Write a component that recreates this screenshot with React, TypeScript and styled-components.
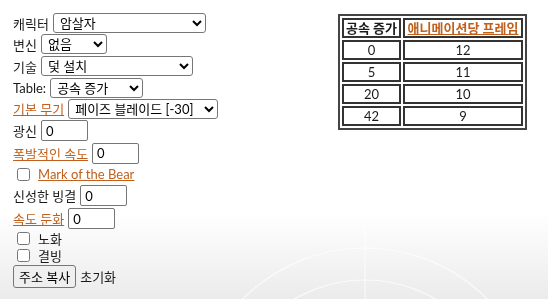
import styled, { createGlobalStyle } from 'styled-components';

const GlobalStyle = createGlobalStyle`
  body {
    margin: 8px;
    font-family: Lato, 'Noto Sans CJK KR', sans-serif;
    font-size: 13px;
    color: #1a1a1a;
    background: #fff;
  }
`;

const Page = styled.div`
  display: flex;
  align-items: flex-start;
  padding: 5px 5px 0;
  height: 286px;
  box-sizing: border-box;
`;

// faint decorative backdrop at the bottom of the page
const Backdrop = styled.svg`
  position: fixed;
  left: 0;
  top: 0;
  width: 548px;
  height: 299px;
  z-index: -1;
`;

const Form = styled.div`
  flex: 0 0 325px;
  display: flex;
  flex-direction: column;
`;

const Row = styled.div<{ $h: number }>`
  display: flex;
  align-items: center;
  gap: 4px;
  height: ${({ $h }) => $h}px;
`;

const LinkLabel = styled.a`
  color: #c0601c;
  text-decoration: underline;
  cursor: pointer;
`;

const Select = styled.select<{ $w: number }>`
  width: ${({ $w }) => $w}px;
  height: 20px;
  font-family: inherit;
  font-size: 13px;
  color: #000;
  background: #fff;
  border: 1px solid #767676;
  border-radius: 3px;
  padding: 0 2px;
`;

const NumInput = styled.input`
  width: 47px;
  height: 21px;
  box-sizing: border-box;
  font-family: inherit;
  font-size: 13px;
  border: 1px solid #767676;
  border-radius: 2px;
  padding: 1px 4px;
`;

const Check = styled.input`
  width: 13px;
  height: 13px;
  margin: 0 4px 0 4px;
`;

const Button = styled.button`
  height: 23px;
  padding: 1px 5px;
  font-family: inherit;
  font-size: 13px;
  color: #000;
  background: #efefef;
  border: 1px solid #767676;
  border-radius: 3px;
`;

const Table = styled.table`
  margin-top: 1px;
  border: 2px solid #444;
  border-spacing: 2px;
  font-size: 13px;
`;

const Cell = styled.td<{ $w: number; $head?: boolean }>`
  box-sizing: border-box;
  width: ${({ $w }) => $w}px;
  height: 20px;
  border: 2px solid #333;
  padding: 0 1px;
  line-height: 16px;
  text-align: center;
  white-space: nowrap;
  font-weight: ${({ $head }) => ($head ? 'bold' : 'normal')};
`;

const rows: [number, number][] = [
  [0, 12],
  [5, 11],
  [20, 10],
  [42, 9],
];

export default function App() {
  return (
    <>
      <GlobalStyle />
      <Backdrop viewBox="0 0 548 299">
        <defs>
          <linearGradient id="fade" x1="0" y1="0" x2="0" y2="1">
            <stop offset="0.71" stopColor="#fff" />
            <stop offset="1" stopColor="#ebebeb" />
          </linearGradient>
        </defs>
        <rect width="548" height="299" fill="url(#fade)" />
        <g fill="none" stroke="#fff" strokeWidth="1.2" opacity="0.7">
          <circle cx="365" cy="420" r="172" />
          <circle cx="365" cy="420" r="140" />
          <line x1="365" y1="222" x2="365" y2="299" />
          <circle cx="640" cy="420" r="150" />
        </g>
      </Backdrop>
      <Page>
        <Form>
          <Row $h={20}>
            <span>캐릭터</span>
            <Select $w={153} defaultValue="암살자">
              <option>암살자</option>
            </Select>
          </Row>
          <Row $h={22}>
            <span>변신</span>
            <Select $w={66} defaultValue="없음">
              <option>없음</option>
            </Select>
          </Row>
          <Row $h={22}>
            <span>기술</span>
            <Select $w={152} defaultValue="덫 설치">
              <option>덫 설치</option>
            </Select>
          </Row>
          <Row $h={21}>
            <span>Table:</span>
            <Select $w={93} defaultValue="공속 증가">
              <option>공속 증가</option>
            </Select>
          </Row>
          <Row $h={21}>
            <LinkLabel>기본 무기</LinkLabel>
            <Select $w={150} defaultValue="페이즈 블레이드 [-30]">
              <option>페이즈 블레이드 [-30]</option>
            </Select>
          </Row>
          <Row $h={23}>
            <span>광신</span>
            <NumInput defaultValue="0" />
          </Row>
          <Row $h={22}>
            <LinkLabel>폭발적인 속도</LinkLabel>
            <NumInput defaultValue="0" />
          </Row>
          <Row $h={20}>
            <Check type="checkbox" />
            <LinkLabel>Mark of the Bear</LinkLabel>
          </Row>
          <Row $h={23}>
            <span>신성한 빙결</span>
            <NumInput defaultValue="0" />
          </Row>
          <Row $h={23}>
            <LinkLabel>속도 둔화</LinkLabel>
            <NumInput defaultValue="0" />
          </Row>
          <Row $h={17}>
            <Check type="checkbox" />
            <span>노화</span>
          </Row>
          <Row $h={17}>
            <Check type="checkbox" />
            <span>결빙</span>
          </Row>
          <Row $h={25}>
            <Button>주소 복사</Button>
            <span>초기화</span>
          </Row>
        </Form>
        <Table>
          <tbody>
            <tr>
              <Cell $w={59} $head>공속 증가</Cell>
              <Cell $w={120} $head>
                <LinkLabel>애니메이션당 프레임</LinkLabel>
              </Cell>
            </tr>
            {rows.map(([ias, frames]) => (
              <tr key={ias}>
                <Cell $w={59}>{ias}</Cell>
                <Cell $w={120}>{frames}</Cell>
              </tr>
            ))}
          </tbody>
        </Table>
      </Page>
    </>
  );
}
